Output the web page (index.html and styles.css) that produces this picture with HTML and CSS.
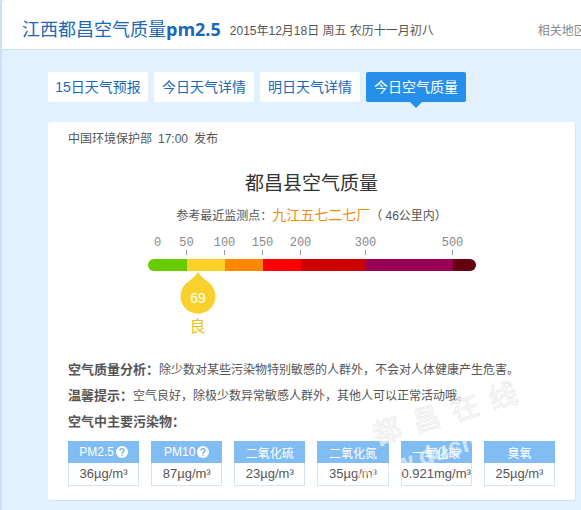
FILE: index.html
```html
<!DOCTYPE html>
<html lang="zh-CN">
<head>
    <meta charset="UTF-8">
    <meta name="viewport" content="width=device-width, initial-scale=1.0">
    <title>江西都昌空气质量pm2.5</title>
    <link rel="stylesheet" href="styles.css">
</head>
<body>
    <header class="page-header">
        <h1>江西都昌空气质量<b>pm2.5</b></h1>
        <p class="date">2015年12月18日 周五 农历十一月初八</p>
        <a class="related" href="#">相关地区</a>
    </header>

    <main class="content">
        <nav class="tabs">
            <a href="#">15日天气预报</a>
            <a href="#">今日天气详情</a>
            <a href="#">明日天气详情</a>
            <a href="#" class="active">今日空气质量</a>
        </nav>

        <section class="panel">
            <p class="source"><span>中国环境保护部</span><span>17:00</span><span>发布</span></p>

            <h2>都昌县空气质量</h2>
            <p class="station">参考最近监测点：<a href="#">九江五七二七厂</a>（ 46公里内）</p>

            <!-- AQI scale -->
            <div class="scale">
                <div class="scale-labels">
                    <span class="first">0</span>
                    <span>50</span>
                    <span>100</span>
                    <span>150</span>
                    <span>200</span>
                    <span>300</span>
                    <span>500</span>
                </div>
                <div class="scale-bar">
                    <i class="good"></i>
                    <i class="moderate"></i>
                    <i class="light"></i>
                    <i class="medium"></i>
                    <i class="heavy"></i>
                    <i class="severe"></i>
                    <i class="extreme"></i>
                </div>
                <div class="marker">
                    <svg width="36" height="42" viewBox="0 0 36 42">
                        <path d="M18 0C21 5 26 8 30 11.5A17.5 17.5 0 1 1 6 11.5C10 8 15 5 18 0Z" fill="#f9d12f"/>
                        <text x="18" y="31" text-anchor="middle">69</text>
                    </svg>
                    <span>良</span>
                </div>
            </div>

            <div class="notes">
                <p><b>空气质量分析：</b>除少数对某些污染物特别敏感的人群外，不会对人体健康产生危害。</p>
                <p><b>温馨提示：</b>空气良好，除极少数异常敏感人群外，其他人可以正常活动哦。</p>
                <p><b>空气中主要污染物：</b></p>
            </div>

            <div class="pollutants">
                <dl>
                    <dt>PM2.5<a href="#" aria-label="PM2.5"><svg width="12" height="12" viewBox="0 0 12 12"><circle cx="6" cy="6" r="6" fill="#fff"/><path d="M4 4.6C4 2 8 2 8 4.4C8 5.8 6 5.8 6 7.4M6 8.4V9.8" fill="none" stroke="#6faee8" stroke-width="1.4"/></svg></a></dt>
                    <dd>36µg/m³</dd>
                </dl>
                <dl>
                    <dt>PM10<a href="#" aria-label="PM10"><svg width="12" height="12" viewBox="0 0 12 12"><circle cx="6" cy="6" r="6" fill="#fff"/><path d="M4 4.6C4 2 8 2 8 4.4C8 5.8 6 5.8 6 7.4M6 8.4V9.8" fill="none" stroke="#6faee8" stroke-width="1.4"/></svg></a></dt>
                    <dd>87µg/m³</dd>
                </dl>
                <dl>
                    <dt>二氧化硫</dt>
                    <dd>23µg/m³</dd>
                </dl>
                <dl>
                    <dt>二氧化氮</dt>
                    <dd>35µg/m³</dd>
                </dl>
                <dl>
                    <dt>一氧化碳</dt>
                    <dd>0.921mg/m³</dd>
                </dl>
                <dl>
                    <dt>臭氧</dt>
                    <dd>25µg/m³</dd>
                </dl>
            </div>

            <svg class="watermark" width="180" height="110" viewBox="0 0 180 110">
                <g transform="rotate(-17 38 64)">
                    <text class="mark-name" x="28" y="62">都</text>
                    <text class="mark-name" x="69" y="62">昌</text>
                    <text class="mark-name" x="109" y="62">在</text>
                    <text class="mark-name" x="149" y="62">线</text>
                    <text class="mark-url" x="0" y="95">www.ducn</text>
                </g>
            </svg>
        </section>
    </main>
</body>
</html>
```

FILE: styles.css
```css
* {
    margin: 0;
    padding: 0;
    box-sizing: border-box;
}

body {
    min-height: 100vh;
    background: #e3f0fd;
    border-left: 2px solid #cbe0f6;
    color: #555;
    font-family: "Liberation Sans", "Noto Sans CJK SC", sans-serif;
    font-size: 12px;
    overflow-x: hidden;
}

a {
    color: inherit;
    text-decoration: none;
}

/* Header */
.page-header {
    display: flex;
    align-items: center;
    height: 50px;
    padding: 6px 0 0 20px;
    background: #fff;
    border-bottom: 1px solid #cfe3f3;
    border-top-left-radius: 4px;
    white-space: nowrap;
    overflow: hidden;
}

.page-header h1 {
    color: #1c68b8;
    font-size: 18px;
    font-weight: 400;
}

.page-header h1 b {
    font-family: "Open Sans", sans-serif;
}

.date {
    margin-left: 9px;
    padding-top: 4px;
}

.related {
    margin-left: 104px;
    padding-top: 4px;
    color: #888;
}

.content {
    padding: 22px 5px 10px 46px;
}

/* Tabs */
.tabs {
    display: flex;
    gap: 6px;
    margin-bottom: 20px;
}

.tabs a {
    width: 100px;
    height: 30px;
    line-height: 30px;
    background: #fff;
    border-radius: 2px;
    color: #1c68b8;
    font-size: 14px;
    text-align: center;
    white-space: nowrap;
}

.tabs .active {
    position: relative;
    background: #258fe9;
    color: #fff;
}

.tabs .active::after {
    content: "";
    position: absolute;
    top: 100%;
    left: 50%;
    margin-left: -6px;
    border: 6px solid transparent;
    border-top-color: #258fe9;
    border-bottom: 0;
}

/* Panel */
.panel {
    position: relative;
    padding: 8px 20px 14px;
    background: #fff;
    border-bottom: 1px solid #cfe3f3;
    border-right: 1px solid #d5e7f5;
    border-radius: 3px;
}

.source {
    display: flex;
    gap: 6px;
    line-height: 18px;
}

.panel h2 {
    margin-top: 22px;
    color: #333;
    font-size: 19px;
    font-weight: 400;
    line-height: 28px;
    text-align: center;
}

.station {
    margin-top: 6px;
    line-height: 22px;
    text-align: center;
}

.station a {
    color: #f08c0c;
    font-size: 14px;
}

/* Scale */
.scale {
    width: 328px;
    margin: 9px auto 0;
}

.scale-labels {
    display: grid;
    grid-template-columns: 20px repeat(4, 38px) 92px 82px;
    margin-right: -18px;
    color: #888;
    font-family: "Liberation Mono", monospace;
    line-height: 14px;
    text-align: center;
}

.scale-labels span::after {
    content: "";
    display: block;
    width: 1px;
    height: 5px;
    margin: 0 auto 4px;
    background: #999;
}

.scale-labels .first::after {
    background: none;
}

.scale-bar {
    display: grid;
    grid-template-columns: 39fr 38fr 38fr 38fr 65fr 87fr 23fr;
    height: 12px;
    border-radius: 6px;
    overflow: hidden;
}

.good { background: #6c0; }
.moderate { background: #fbd029; }
.light { background: #f80; }
.medium { background: #f00; }
.heavy { background: #c00; }
.severe { background: #905; }
.extreme { background: #601; }

.marker {
    display: flex;
    flex-direction: column;
    width: 36px;
    margin: 1px 0 0 32px;
    color: #f0c020;
    font-size: 16px;
    line-height: 26px;
    text-align: center;
}

.marker text {
    fill: #fff;
    font-size: 14px;
}

/* Notes */
.notes {
    margin-top: 17px;
    line-height: 26px;
}

.notes b {
    font-size: 13px;
}

/* Pollutants */
.pollutants {
    display: grid;
    grid-template-columns: repeat(6, 1fr);
    gap: 12px;
    margin-top: 6px;
    text-align: center;
    white-space: nowrap;
}

.pollutants dt {
    display: flex;
    justify-content: center;
    align-items: center;
    gap: 2px;
    height: 22px;
    background: #81bdf3;
    color: #fff;
}

.pollutants dt a {
    display: flex;
}

.pollutants dd {
    height: 23px;
    border: 1px solid #d5e4f0;
    border-top: 0;
    font-size: 13px;
    line-height: 22px;
}

.watermark {
    position: absolute;
    right: 46px;
    bottom: 10px;
    overflow: visible;
    pointer-events: none;
}

.mark-name {
    fill: #fff;
    fill-opacity: 0.3;
    stroke: #ececec;
    stroke-width: 1;
    font-size: 28px;
}

.mark-url {
    fill: #fff;
    fill-opacity: 0.6;
    font-size: 25px;
    font-weight: 700;
}
```
